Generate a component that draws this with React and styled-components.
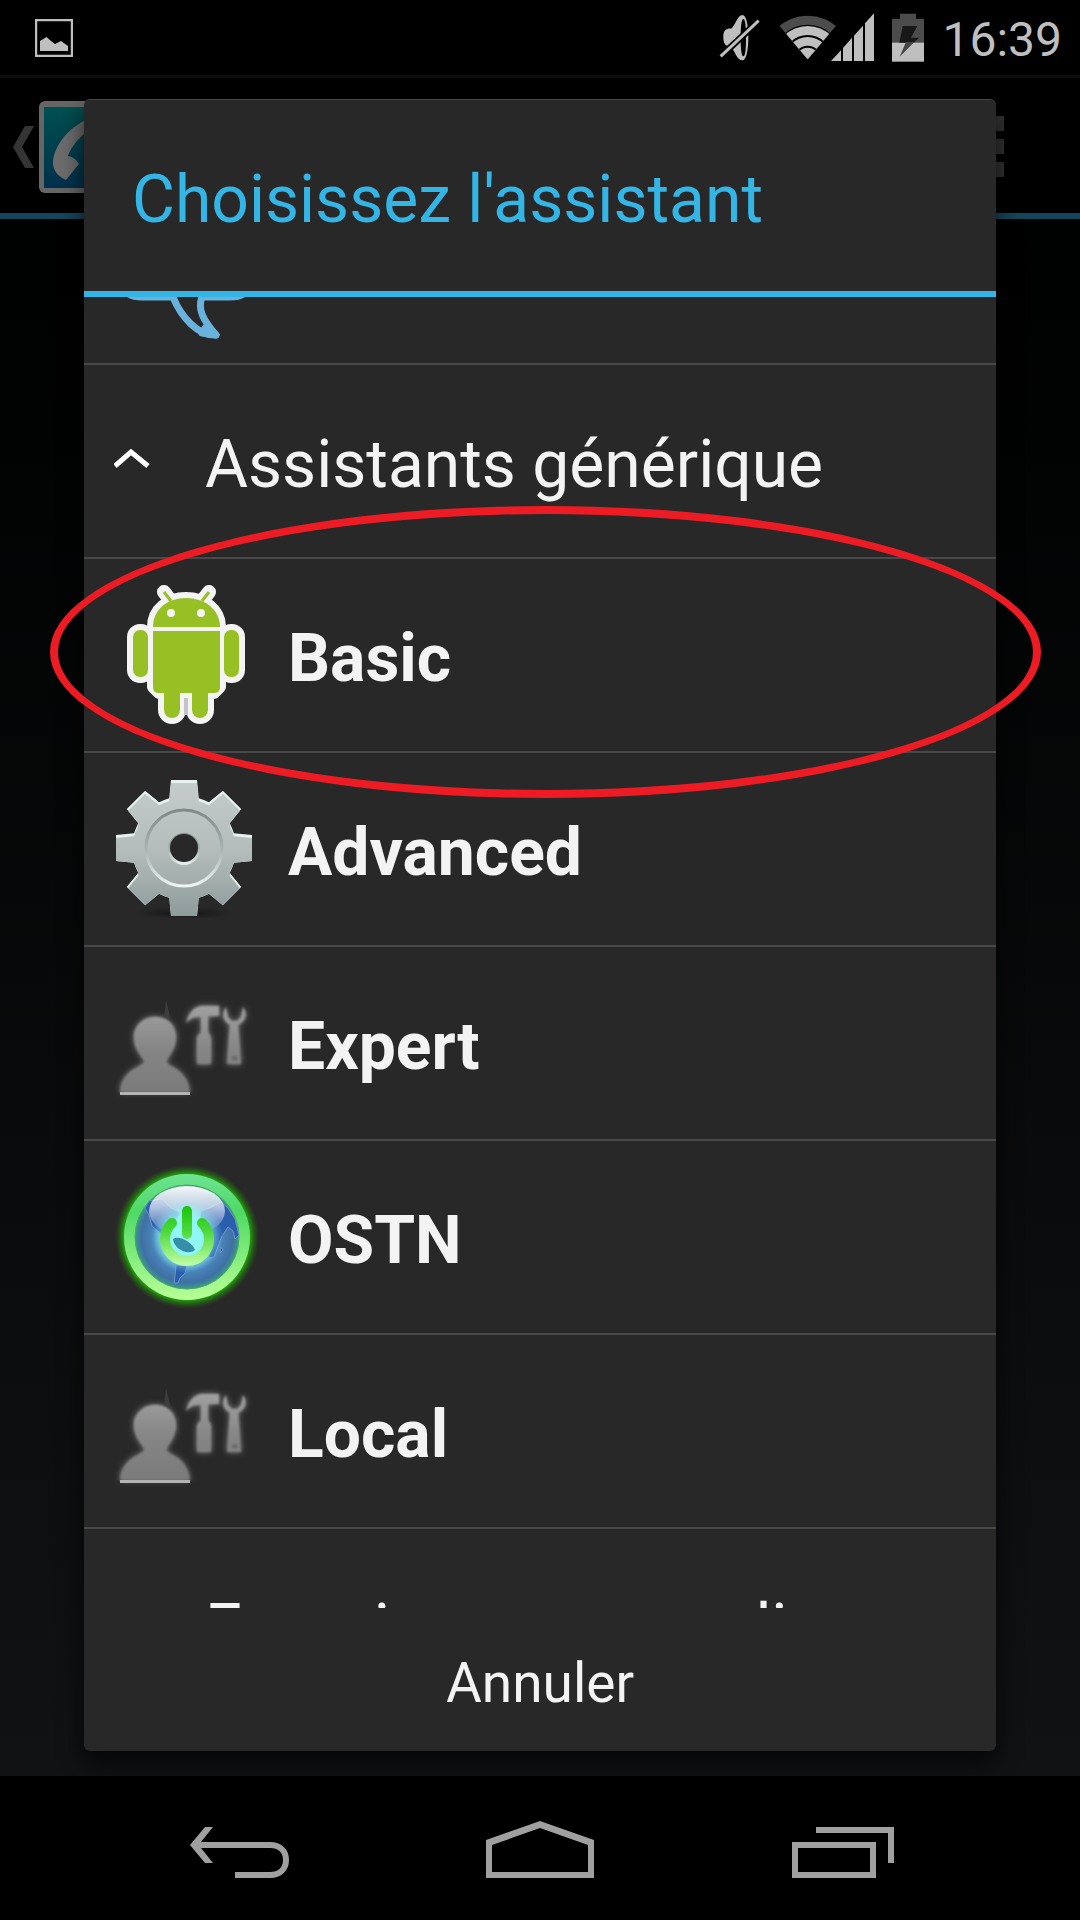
import { useLayoutEffect, useRef } from "react";
import styled, { createGlobalStyle } from "styled-components";

const GlobalStyle = createGlobalStyle`
    * {
        box-sizing: border-box;
    }

    body {
        margin: 0;
        background-color: #000;
        font-family: Roboto, "Liberation Sans", sans-serif;
    }

    button {
        border: none;
        background: none;
        padding: 0;
        margin: 0;
        font: inherit;
        color: inherit;
        cursor: pointer;
    }

    svg {
        display: block;
        flex-shrink: 0;
    }
`;

const Screen = styled.div`
    display: flex;
    flex-direction: column;
    height: 100vh;
    background-color: #000;
    color: #f3f3f3;
`;

const StatusBar = styled.header`
    display: flex;
    align-items: center;
    justify-content: space-between;
    flex-shrink: 0;
    height: 75px;
    padding: 0 18px 0 35px;
    color: #bfbfbf;
`;

const StatusIcons = styled.div`
    display: flex;
    align-items: center;
    gap: 18px;
`;

const Clock = styled.time`
    padding-top: 4px;
    font-size: 48px;
    line-height: 56px;
`;

const Stage = styled.main`
    position: relative;
    flex: 1;
    min-height: 0;
    background: linear-gradient(#000, #010202 20%, #101214);
`;

const ActionBar = styled.div`
    display: flex;
    align-items: center;
    justify-content: space-between;
    height: 144px;
    padding: 2px 76px 0 13px;
    border-top: 3px solid #0d0d0d;
    border-bottom: 6px solid #14465b;
    background-color: #000;
`;

const UpButton = styled.button`
    display: flex;
    align-items: center;
    gap: 5px;
`;

const MenuButton = styled.button`
    display: flex;
    flex-direction: column;
    gap: 8px;

    & span {
        width: 15px;
        height: 15px;
        background-color: #323232;
    }
`;

const Overlay = styled.div`
    position: absolute;
    inset: 0;
    display: flex;
    padding: 24px 84px 25px;
`;

const Dialog = styled.section`
    display: flex;
    flex-direction: column;
    flex: 1;
    min-width: 0;
    border-top: 1px solid #4a4848;
    border-radius: 6px;
    background-color: #282828;
    box-shadow: 0 12px 24px rgba(0, 0, 0, .7);
`;

const DialogTitle = styled.h1`
    display: flex;
    align-items: center;
    flex-shrink: 0;
    height: 197px;
    margin: 0;
    padding: 8px 48px 0;
    border-bottom: 6px solid #33b5e5;
    color: #33b5e5;
    font-size: 66px;
    font-weight: 400;
    line-height: 78px;
`;

const List = styled.div`
    flex: 1;
    min-height: 0;
    overflow-y: auto;
    scrollbar-width: none;
`;

const Row = styled.button`
    display: flex;
    align-items: center;
    gap: ${({ $group }) => ($group ? "55px" : "30px")};
    width: 100%;
    height: 194px;
    padding: 0 30px;
    border-bottom: 2px solid #484848;
    font-size: 66px;
    font-weight: ${({ $group }) => ($group ? 400 : 700)};
    line-height: 78px;
    text-align: left;
    white-space: nowrap;
`;

const RowLabel = styled.span`
    padding-top: 8px;
`;

const CancelButton = styled.button`
    flex-shrink: 0;
    height: 143px;
    padding-top: 6px;
    font-size: 55px;
    line-height: 64px;
`;

const Highlight = styled.div`
    position: absolute;
    top: 431px;
    left: 50px;
    right: 39px;
    height: 292px;
    border: 8px solid #ed1c24;
    border-radius: 50%;
    pointer-events: none;
`;

const NavBar = styled.nav`
    display: grid;
    grid-template-columns: repeat(3, 1fr);
    flex-shrink: 0;
    height: 144px;
    padding: 0 87px;
    color: #a0a0a0;

    & button {
        display: flex;
        align-items: center;
        justify-content: center;
    }
`;

const PictureIcon = () => (
    <svg width="38" height="38" viewBox="0 0 38 38" fill="currentColor">
        <path d="M1 1H37V37H1Z" fill="none" stroke="currentColor" strokeWidth="2.4" />
        <path d="M5 32V22L11.500 18L16 22L20 25L26 22L33 27V32Z" />
    </svg>
);

const MuteIcon = () => (
    <svg width="41" height="50" viewBox="56 38 123 150" fill="currentColor">
        <path d="M122 45C108 52 104 78 92 85C80 84 68 88 69 112C70 134 78 138 90 136C102 148 108 176 124 180Z" />
        <path d="M126 44C138 44 144 76 144 112S138 180 126 180S109 148 109 112S115 44 126 44Z" />
        <path d="M129 56C135 56 137 80 137 112S135 168 129 168S121 144 121 112S123 56 129 56Z" fill="#000" />
        <path d="M58 171L178 59" stroke="#000" strokeWidth="20" />
        <path d="M61 168L175 61" stroke="currentColor" strokeWidth="9" />
    </svg>
);

const SignalIcon = () => (
    <svg width="96" height="50" viewBox="240 36 288 150" fill="currentColor">
        <clipPath id="wifi">
            <path d="M329 175L229 57V36H429V57Z" />
        </clipPath>
        <g clipPath="url(#wifi)">
            <circle cx="329" cy="175" r="131" fill="#4c4c4c" />
            <circle cx="329" cy="175" r="104" fill="#000" />
            <circle cx="329" cy="175" r="100" />
            <circle cx="329" cy="175" r="73" fill="#000" />
            <circle cx="329" cy="175" r="67" />
            <circle cx="329" cy="175" r="41" fill="#000" />
            <circle cx="329" cy="175" r="35" />
        </g>
        <path d="M399 180L429 148V180ZM435 141L462 110V180H435ZM468 104L495 74V180H468ZM501 67L528 37V180H501Z" />
    </svg>
);

const BatteryIcon = () => (
    <svg width="32" height="50" viewBox="576 34 96 150">
        <path d="M576 51H600V36H648V51H672V124H576Z" fill="#4c4c4c" />
        <path d="M576 123H672V180H576Z" fill="#bfbfbf" />
        <path d="M608 73H652L633 108H657L641 123H598Z" fill="#181818" />
        <path d="M618 121H643L599 165Z" fill="#444" />
    </svg>
);

const UpIcon = () => (
    <svg width="21" height="42" viewBox="0 0 21 42">
        <path d="M12 0H21L9 21L21 42H12L0 21Z" fill="#353535" />
    </svg>
);

const PhoneAppIcon = () => (
    <svg width="92" height="92" viewBox="0 0 92 92">
        <defs>
            <linearGradient id="phone" x1="0" y1="0" x2="0" y2="1">
                <stop offset="0" stopColor="#005050" />
                <stop offset="1" stopColor="#00304c" />
            </linearGradient>
        </defs>
        <rect width="92" height="92" rx="6" fill="#666" />
        <rect x="5" y="6" width="82" height="81" fill="url(#phone)" />
        <path d="M60 14C30 22 14 46 14 62C14 70 20 76 27 79L40 63C37 58 34 56 29 55C32 46 39 38 47 31Z" fill="#6c6c6c" />
    </svg>
);

const BubbleIcon = () => (
    <svg width="144" height="144" viewBox="0 0 144 144" fill="none" stroke="#68b2dc" strokeWidth="7" strokeLinejoin="round">
        <path d="M59 102H28Q8 102 8 84V28Q8 11 26 11H119Q136 11 136 28V84Q136 102 116 102H88C83 115 90 126 102 140C84 141 67 122 59 102Z" />
        <path d="M92 132L102 140L88 138Z" />
    </svg>
);

const AndroidIcon = () => (
    <svg width="144" height="144" viewBox="0 0 144 144">
        <g fill="#f4f4f4" stroke="#f4f4f4" strokeWidth="12" strokeLinejoin="round">
            <path d="M39 44C39 26 54 15 72 15S106 26 106 44V104L100 110H94V127A8 8 0 0 1 78 127V110H66V127A8 8 0 0 1 50 127V110H45L39 104Z" />
            <rect x="19" y="47" width="15" height="47" rx="7" />
            <rect x="110" y="47" width="15" height="47" rx="7" />
            <path d="M57 18L50 9M88 18L95 9" strokeWidth="14" strokeLinecap="round" />
        </g>
        <path d="M70 115H74V132H70Z" fill="#c4c4c8" />
        <g fill="#97c024">
            <path d="M39 44C39 26 54 15 72 15S106 26 106 44Z" />
            <path d="M39 48H106V104Q106 110 100 110H94V127A8 8 0 0 1 78 127V110H66V127A8 8 0 0 1 50 127V110H45Q39 110 39 104Z" />
            <rect x="19" y="47" width="15" height="47" rx="7" />
            <rect x="110" y="47" width="15" height="47" rx="7" />
            <path d="M57 18L50 9M88 18L95 9" stroke="#97c024" strokeWidth="3" />
        </g>
        <circle cx="57" cy="30" r="4" fill="#f4f4f4" />
        <circle cx="87" cy="30" r="4" fill="#f4f4f4" />
    </svg>
);

const GearIcon = () => (
    <svg width="144" height="144" viewBox="0 0 144 144">
        <defs>
            <linearGradient id="metal" x1="0" y1="0" x2="0" y2="1">
                <stop offset="0" stopColor="#c6cdcc" />
                <stop offset=".5" stopColor="#b3bcbb" />
                <stop offset="1" stopColor="#899796" />
            </linearGradient>
            <linearGradient id="groove" x1="0" y1="0" x2="0" y2="1">
                <stop offset="0" stopColor="#7f8988" />
                <stop offset=".5" stopColor="#a8b2b1" />
                <stop offset="1" stopColor="#edf4f3" />
            </linearGradient>
            <radialGradient id="gearShade">
                <stop offset="0" stopColor="#000" stopOpacity=".5" />
                <stop offset="1" stopColor="#000" stopOpacity="0" />
            </radialGradient>
            <clipPath id="gear">
                <circle cx="70" cy="71" r="52" />
                {[0, 45, 90, 135, 180, 225, 270, 315].map((angle) => (
                    <path key={angle} d="M54 34L57 3H83L86 34Z" transform={`rotate(${angle} 70 71)`} />
                ))}
            </clipPath>
        </defs>
        <ellipse cx="70" cy="136" rx="50" ry="6" fill="url(#gearShade)" />
        <g clipPath="url(#gear)">
            <rect width="144" height="144" fill="#e6f1f0" />
            <g transform="translate(0 3)">
                <rect width="144" height="144" fill="url(#metal)" clipPath="url(#gear)" />
            </g>
        </g>
        <circle cx="70" cy="71" r="38" fill="none" stroke="url(#groove)" strokeWidth="3" />
        <circle cx="70" cy="72" r="16" fill="url(#groove)" />
        <circle cx="70" cy="71" r="14" fill="#282828" />
    </svg>
);

const ExpertIcon = () => (
    <svg width="144" height="144" viewBox="0 0 144 144">
        <defs>
            <linearGradient id="person" x1="0" y1="35" x2="0" y2="123" gradientUnits="userSpaceOnUse">
                <stop offset="0" stopColor="#a0a0a0" />
                <stop offset=".5" stopColor="#858585" />
                <stop offset="1" stopColor="#7a7a7a" />
            </linearGradient>
            <filter id="glow" x="-20%" y="-20%" width="140%" height="140%">
                <feGaussianBlur stdDeviation="3" />
            </filter>
            <filter id="soften">
                <feGaussianBlur stdDeviation="1" />
            </filter>
            <g id="personTools">
                <path d="M41 46C55 46 62 56 62 66C62 77 55 85 52 90C52 97 72 95 76 121H6C9 96 30 97 31 90C27 85 20 77 20 66C20 56 28 46 41 46Z" />
                <path d="M72 52C74 43 80 35 89 35H105V45H94V62Q97 64 97 68V93H83V68Q83 64 87 62V46C81 45 77 47 72 52Z" />
                <path fillRule="evenodd" d="M112 36C107 43 109 50 116 54L113 93H127L124 54C132 50 134 43 129 36L127 46L123 50H118L114 46ZM118 85H123V89H118Z" />
            </g>
        </defs>
        <use href="#personTools" fill="#888" filter="url(#glow)" />
        <path d="M52 29L57 50L50 46Z" fill="#3d3d3d" />
        <use href="#personTools" fill="url(#person)" filter="url(#soften)" />
        <path d="M6 121H76V124H6Z" fill="#b4b4b4" />
    </svg>
);

const PowerGlobeIcon = () => (
    <svg width="144" height="144" viewBox="0 0 144 144">
        <defs>
            <radialGradient id="halo">
                <stop offset=".86" stopColor="#24b80c" />
                <stop offset=".93" stopColor="#238c0c" stopOpacity=".5" />
                <stop offset="1" stopColor="#237010" stopOpacity="0" />
            </radialGradient>
            <linearGradient id="ring" x1="0" y1="0" x2="0" y2="1">
                <stop offset="0" stopColor="#6fe394" />
                <stop offset=".3" stopColor="#4fd965" />
                <stop offset="1" stopColor="#b8ff96" />
            </linearGradient>
            <radialGradient id="sea">
                <stop offset="0" stopColor="#a2ffff" />
                <stop offset=".4" stopColor="#78dcee" />
                <stop offset=".65" stopColor="#4a86bb" />
                <stop offset=".88" stopColor="#3f70a4" />
                <stop offset="1" stopColor="#3b9a88" />
            </radialGradient>
            <linearGradient id="gloss" x1="0" y1="0" x2="0" y2="1">
                <stop offset="0" stopColor="#fff" stopOpacity=".95" />
                <stop offset=".4" stopColor="#fff" stopOpacity=".65" />
                <stop offset="1" stopColor="#fff" stopOpacity="0" />
            </linearGradient>
            <linearGradient id="power" x1="0" y1="42" x2="0" y2="101" gradientUnits="userSpaceOnUse">
                <stop offset="0" stopColor="#1ac60c" />
                <stop offset=".4" stopColor="#4bd839" />
                <stop offset="1" stopColor="#c2ffa8" />
            </linearGradient>
            <radialGradient id="core">
                <stop offset=".5" stopColor="#8ff8f6" stopOpacity=".9" />
                <stop offset="1" stopColor="#84e6f3" stopOpacity="0" />
            </radialGradient>
        </defs>
        <circle cx="73" cy="72" r="72" fill="url(#halo)" />
        <circle cx="73" cy="72" r="63" fill="url(#ring)" />
        <circle cx="73" cy="72" r="52" fill="url(#sea)" stroke="#47a865" />
        <g fill="#2c5eae" stroke="#6c95ca" strokeWidth="1">
            <path d="M35 36L48 34L56 42L66 48L61 56L54 63L48 69L45 67L38 61L35 50L31 43Z" />
            <path d="M62 100L73 101L71 108L66 113L64 118H60L61 111Z" />
            <path d="M87 46L95 43L107 37L114 43L121 54L125 70L121 74L119 66L114 62L108 71L104 81L100 92L95 93L94 75L89 62L86 55Z" />
            <path d="M107 82L109 85L106 88Z" />
        </g>
        <ellipse cx="73" cy="46" rx="38" ry="25" fill="url(#gloss)" />
        <circle cx="73" cy="72" r="36" fill="url(#core)" />
        <path d="M59 74C65 70 78 77 81 85C74 91 60 84 59 74Z" fill="#358da8" />
        <path d="M58 58A22 22 0 1 0 88 58" fill="none" stroke="url(#power)" strokeWidth="10" strokeLinecap="round" />
        <rect x="68" y="41" width="10" height="33" rx="5" fill="url(#power)" />
    </svg>
);

const GroupArrow = ({ open }) => (
    <svg width="36" height="24" viewBox="0 0 36 24" fill="none" stroke="#fff" strokeWidth="5">
        <path d={open ? "M1 17L17 3L34 17" : "M1 5L17 19L34 5"} />
    </svg>
);

const BackIcon = () => (
    <svg width="108" height="60" viewBox="0 0 108 60">
        <path d="M6 27L21 9H29L17 24V30L29 45H21Z" fill="currentColor" />
        <path d="M16 27H86C96 27 102 33 102 42S96 57 86 57H51" fill="none" stroke="currentColor" strokeWidth="6" />
    </svg>
);

const HomeIcon = () => (
    <svg width="108" height="60" viewBox="0 0 108 60">
        <path fillRule="evenodd" d="M0 22L54 3L108 22V60H0ZM6 27V54H102V27L54 10Z" fill="currentColor" />
    </svg>
);

const RecentsIcon = () => (
    <svg width="108" height="60" viewBox="0 0 108 60" fill="none" stroke="currentColor" strokeWidth="6">
        <path d="M7 27H85V57H7ZM28 12H103V45" />
    </svg>
);

const wizards = [
    { name: "Basic", Icon: AndroidIcon },
    { name: "Advanced", Icon: GearIcon },
    { name: "Expert", Icon: ExpertIcon },
    { name: "OSTN", Icon: PowerGlobeIcon },
    { name: "Local", Icon: ExpertIcon },
];

// the list opens scrolled past most of the last local provider
const START_SCROLL = 126;

const App = () => {
    const listRef = useRef(null);

    useLayoutEffect(() => {
        listRef.current.scrollTop = START_SCROLL;
    }, []);

    return (
        <>
            <GlobalStyle />
            <Screen>
                <StatusBar>
                    <PictureIcon />
                    <StatusIcons>
                        <MuteIcon />
                        <SignalIcon />
                        <BatteryIcon />
                        <Clock>16:39</Clock>
                    </StatusIcons>
                </StatusBar>
                <Stage>
                    <ActionBar>
                        <UpButton>
                            <UpIcon />
                            <PhoneAppIcon />
                        </UpButton>
                        <MenuButton>
                            <span />
                            <span />
                            <span />
                        </MenuButton>
                    </ActionBar>
                    <Overlay>
                        <Dialog role="dialog" aria-labelledby="wizard-title">
                            <DialogTitle id="wizard-title">Choisissez l'assistant</DialogTitle>
                            <List ref={listRef}>
                                <Row>
                                    <BubbleIcon />
                                </Row>
                                <Row $group aria-expanded="true">
                                    <GroupArrow open />
                                    <RowLabel>Assistants générique</RowLabel>
                                </Row>
                                {wizards.map(({ name, Icon }) => (
                                    <Row key={name}>
                                        <Icon />
                                        <RowLabel>{name}</RowLabel>
                                    </Row>
                                ))}
                                <Row $group aria-expanded="false">
                                    <GroupArrow />
                                    <RowLabel>Fournisseurs mondiaux</RowLabel>
                                </Row>
                            </List>
                            <CancelButton>Annuler</CancelButton>
                        </Dialog>
                    </Overlay>
                    <Highlight />
                </Stage>
                <NavBar>
                    <button aria-label="Retour">
                        <BackIcon />
                    </button>
                    <button aria-label="Accueil">
                        <HomeIcon />
                    </button>
                    <button aria-label="Applications récentes">
                        <RecentsIcon />
                    </button>
                </NavBar>
            </Screen>
        </>
    );
};

export default App;
